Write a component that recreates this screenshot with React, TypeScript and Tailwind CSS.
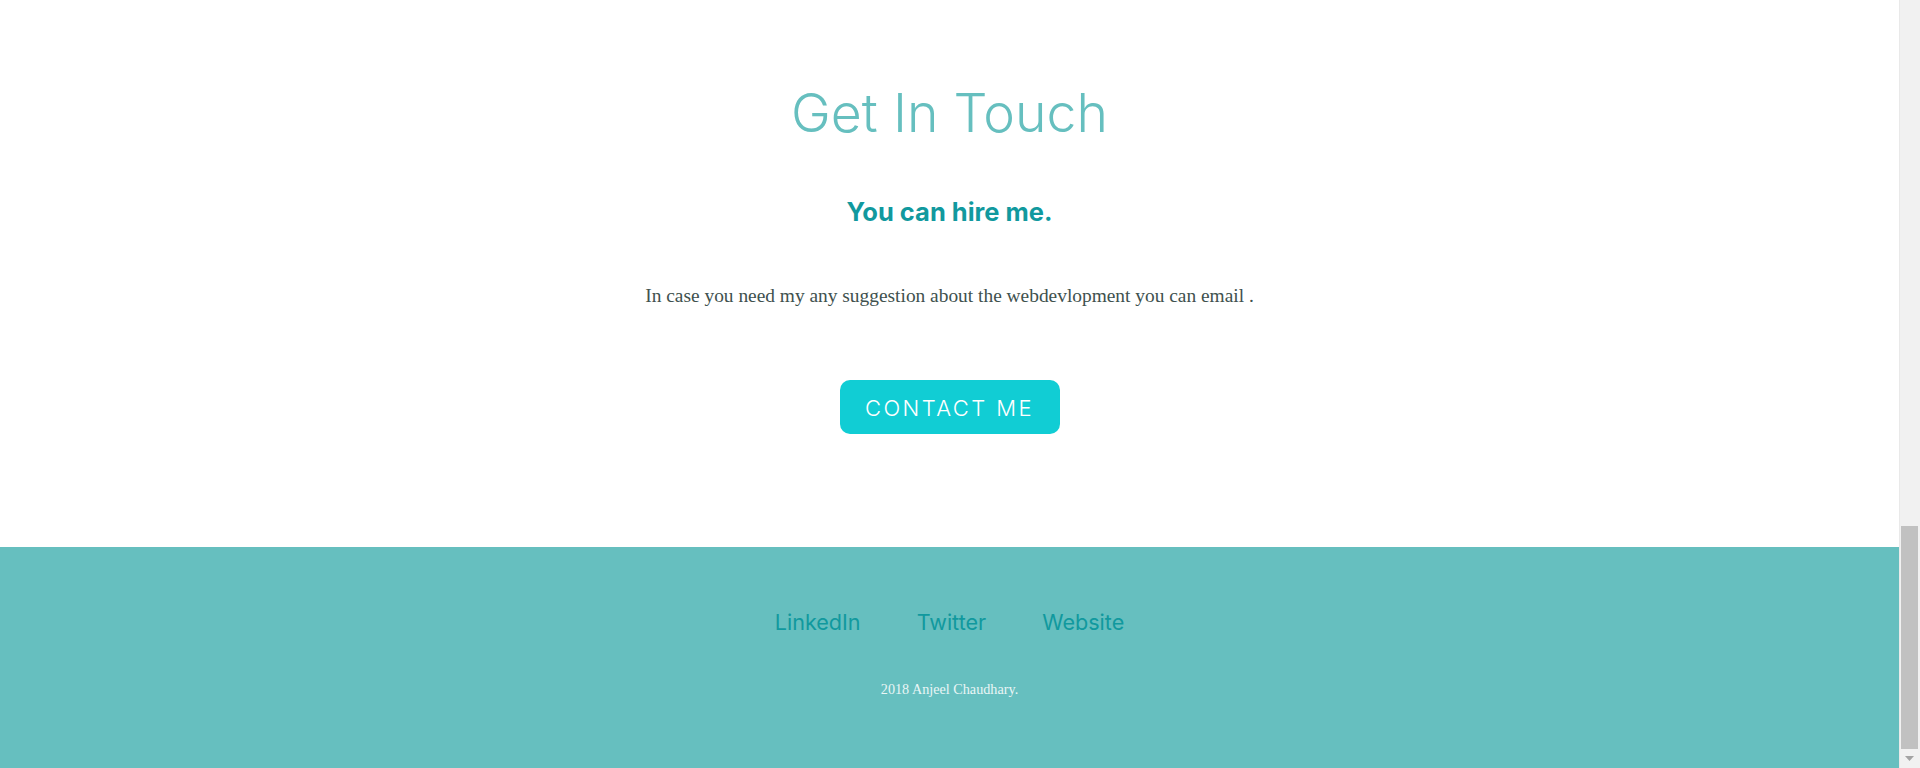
import React from "react";

const sans = "font-['Inter','Open_Sans',sans-serif]";
const serif = "font-['Liberation_Serif','Times_New_Roman',serif]";

function Scrollbar() {
    return (
        <div className="flex w-[21px] shrink-0 flex-col border-l border-[#e9e9e9] bg-[#f1f1f1]">
            <div className="flex-1" />
            <div className="ml-[1px] mr-[2px] h-[223px] bg-[#c1c1c1]" />
            <div className="flex h-[19px] items-start justify-center pt-[7px] pr-[1px]">
                <svg width="9" height="5" viewBox="0 0 9 5">
                    <polygon points="0,0 9,0 4.5,5" fill="#a3a3a3" />
                </svg>
            </div>
        </div>
    );
}

export default function App() {
    const links = ["LinkedIn", "Twitter", "Website"];

    return (
        <div className="flex h-screen w-full overflow-hidden bg-white">
            <div className="flex flex-1 flex-col text-center">
                <section className="flex flex-col items-center pt-[87px] pb-[113px]">
                    <h2 className={`${sans} text-[53.5px] font-light leading-[52px] text-[#66BFBF]`}>
                        Get In Touch
                    </h2>
                    <h3 className={`${sans} mt-[61px] text-[25.5px] font-bold leading-[24px] text-[#11999E]`}>
                        You can hire me.
                    </h3>
                    <p className={`${serif} mt-[52px] text-[19.4px] leading-[40px] text-[#40514E]`}>
                        In case you need my any suggestion about the webdevlopment you can email .
                    </p>
                    <a
                        href="#"
                        className={`${sans} mt-[64px] flex h-[54px] w-[220px] items-center justify-center rounded-[10px] bg-[#11cdd4] pt-[2px] text-[22px] font-light tracking-[2.4px] text-white`}
                    >
                        CONTACT ME
                    </a>
                </section>

                <footer className="flex flex-1 flex-col items-center bg-[#66BFBF] pt-[61px]">
                    <div className="flex items-center gap-[56px]">
                        {links.map((l) => (
                            <a key={l} href="#" className={`${sans} text-[21.6px] leading-[28px] text-[#11999E]`}>
                                {l}
                            </a>
                        ))}
                    </div>
                    <p className={`${serif} mt-[43px] text-[14.2px] leading-[20px] text-[#EAF6F6]`}>
                        2018 Anjeel Chaudhary.
                    </p>
                </footer>
            </div>
            <Scrollbar />
        </div>
    );
}
